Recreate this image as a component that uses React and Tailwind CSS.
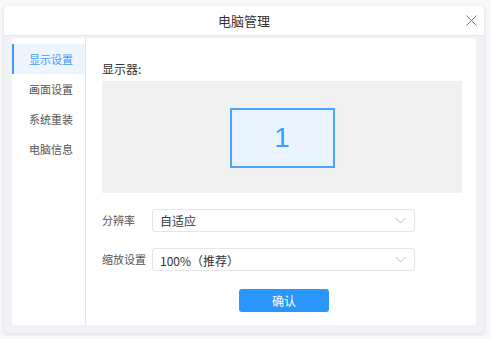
import React from 'react';

const menu = ['显示设置', '画面设置', '系统重装', '电脑信息'];

function Chevron() {
  return (
    <svg width="11" height="7" viewBox="0 0 11 7" fill="none" stroke="#b5b8bf" strokeWidth="1">
      <path d="M0.5 1 L5.5 6 L10.5 1" />
    </svg>
  );
}

function Select({ value, lower }) {
  return (
    <div className="flex h-[23px] w-[263px] items-center justify-between rounded-[3px] border border-[#e3e5e9] bg-white pl-[7px] pr-[8px]">
      <span className={`text-[12px] text-[#333] ${lower ? 'mt-[3px]' : ''}`}>{value}</span>
      <Chevron />
    </div>
  );
}

export default function App() {
  return (
    <div
      className="h-[339px] w-[491px] bg-[#f8f8fa] pl-[4px] pt-[6px]"
      style={{ fontFamily: '"Noto Sans CJK SC", "Noto Sans", sans-serif' }}
    >
      <div className="flex h-[327px] w-[480px] flex-col overflow-hidden rounded-[4px] bg-[#f1f2f6] shadow-[0_1px_4px_rgba(0,0,0,0.12)]">
        {/* 标题栏 */}
        <div className="relative flex h-[30px] shrink-0 items-center justify-center border-b border-[#e6e7eb] bg-white">
          <span className="text-[13px] text-[#333]">电脑管理</span>
          <svg className="absolute right-[7px] top-[9px]" width="11" height="11" viewBox="0 0 11 11" stroke="#777" strokeWidth="1">
            <path d="M0.5 0.5 L10.5 10.5 M10.5 0.5 L0.5 10.5" />
          </svg>
        </div>

        {/* 主体 */}
        <div className="px-[8px] pt-[2px]">
          <div className="flex h-[287px] rounded-[3px] bg-white">
            <div className="w-[74px] shrink-0 border-r border-[#e3e4e8] pt-[6px]">
              {menu.map((m, i) =>
                i === 0 ? (
                  <div key={m} className="flex h-[30px] items-center border-l-[2px] border-[#3d9bf9] bg-[#edf5ff] pl-[15px] text-[11px] text-[#3d9bf9]">
                    {m}
                  </div>
                ) : (
                  <div key={m} className="flex h-[30px] items-center pl-[17px] text-[11px] text-[#555]">
                    {m}
                  </div>
                )
              )}
            </div>

            <div className="flex-1 pl-[16px] pr-[14px] pt-[24px]">
              <div className="text-[12px] leading-[14px] text-[#333]">显示器:</div>
              <div className="mt-[5px] flex h-[112px] w-[360px] items-center justify-center bg-[#f1f1f1]">
                <div className="mt-[2px] flex h-[60px] w-[105px] items-center justify-center border-2 border-[#4aa5ff] bg-[#eaf4ff]">
                  <span className="text-[28px] leading-none text-[#3d9bf9]" style={{ fontFamily: '"Liberation Sans", sans-serif' }}>1</span>
                </div>
              </div>

              <div className="mt-[16px] flex items-center">
                <span className="w-[50px] text-[11px] text-[#555]">分辨率</span>
                <Select value="自适应" />
              </div>
              <div className="mt-[16px] flex items-center">
                <span className="w-[50px] text-[11px] text-[#555]">缩放设置</span>
                <Select value="100%（推荐）" lower />
              </div>

              <div className="mt-[18px] flex pl-[137px]">
                <button className="h-[23px] w-[90px] rounded-[3px] bg-[#2b96fa] text-[12px] text-white">确认</button>
              </div>
            </div>
          </div>
        </div>
      </div>
    </div>
  );
}
